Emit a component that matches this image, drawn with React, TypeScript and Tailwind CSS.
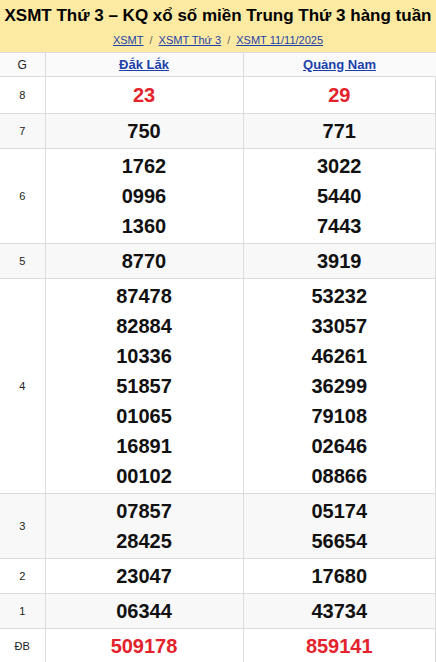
const rows: { label: string; a: string[]; b: string[]; red?: boolean }[] = [
  { label: "8", a: ["23"], b: ["29"], red: true },
  { label: "7", a: ["750"], b: ["771"] },
  { label: "6", a: ["1762", "0996", "1360"], b: ["3022", "5440", "7443"] },
  { label: "5", a: ["8770"], b: ["3919"] },
  {
    label: "4",
    a: ["87478", "82884", "10336", "51857", "01065", "16891", "00102"],
    b: ["53232", "33057", "46261", "36299", "79108", "02646", "08866"],
  },
  { label: "3", a: ["07857", "28425"], b: ["05174", "56654"] },
  { label: "2", a: ["23047"], b: ["17680"] },
  { label: "1", a: ["06344"], b: ["43734"] },
  { label: "ĐB", a: ["509178"], b: ["859141"], red: true },
];

function NumberCell({ values, red }: { values: string[]; red?: boolean }) {
  return (
    <td className="border border-[#dcdcdc] py-[2px] text-center align-middle">
      {values.map((v) => (
        <div
          key={v}
          className={`text-[20px] font-bold leading-[30px] ${red ? "text-[#e3222c]" : "text-[#111]"}`}
        >
          {v}
        </div>
      ))}
    </td>
  );
}

export default function App() {
  return (
    <div className="w-[436px] h-[662px] overflow-hidden bg-white font-['Liberation_Sans',Arial,sans-serif]">
      <div className="h-[52px] bg-[#fdeaa2] pt-[5px] text-center">
        <h1 className="text-[17px] font-bold leading-[22px] text-black whitespace-nowrap">
          XSMT Thứ 3 – KQ xổ số miền Trung Thứ 3 hàng tuần
        </h1>
        <div className="mt-[5px] text-[11px] leading-[16px] text-[#666]">
          <a href="#" className="text-[#1c3faa] underline">XSMT</a>
          <span className="mx-[6px]">/</span>
          <a href="#" className="text-[#1c3faa] underline">XSMT Thứ 3</a>
          <span className="mx-[6px]">/</span>
          <a href="#" className="text-[#1c3faa] underline">XSMT 11/11/2025</a>
        </div>
      </div>
      <table className="w-full table-fixed border-collapse">
        <colgroup>
          <col className="w-[45px]" />
          <col className="w-[198px]" />
          <col />
        </colgroup>
        <thead>
          <tr className="bg-[#fafafa] h-[24px]">
            <th className="border border-[#dcdcdc] border-l-0 text-[12px] font-normal text-[#222]">G</th>
            <th className="border border-[#dcdcdc] text-[13px] font-bold">
              <a href="#" className="text-[#1c3faa] underline">Đắk Lắk</a>
            </th>
            <th className="border border-[#dcdcdc] border-r-0 text-[13px] font-bold">
              <a href="#" className="text-[#1c3faa] underline">Quảng Nam</a>
            </th>
          </tr>
        </thead>
        <tbody>
          {rows.map((r, i) => (
            <tr
              key={r.label}
              className={`${i % 2 === 1 ? "bg-[#f8f8f8]" : "bg-white"} ${i === 0 ? "h-[37px]" : ""}`}
            >
              <td className="border border-[#dcdcdc] border-l-0 text-center text-[11px] text-[#222]">
                {r.label}
              </td>
              <NumberCell values={r.a} red={r.red} />
              <NumberCell values={r.b} red={r.red} />
            </tr>
          ))}
        </tbody>
      </table>
    </div>
  );
}
